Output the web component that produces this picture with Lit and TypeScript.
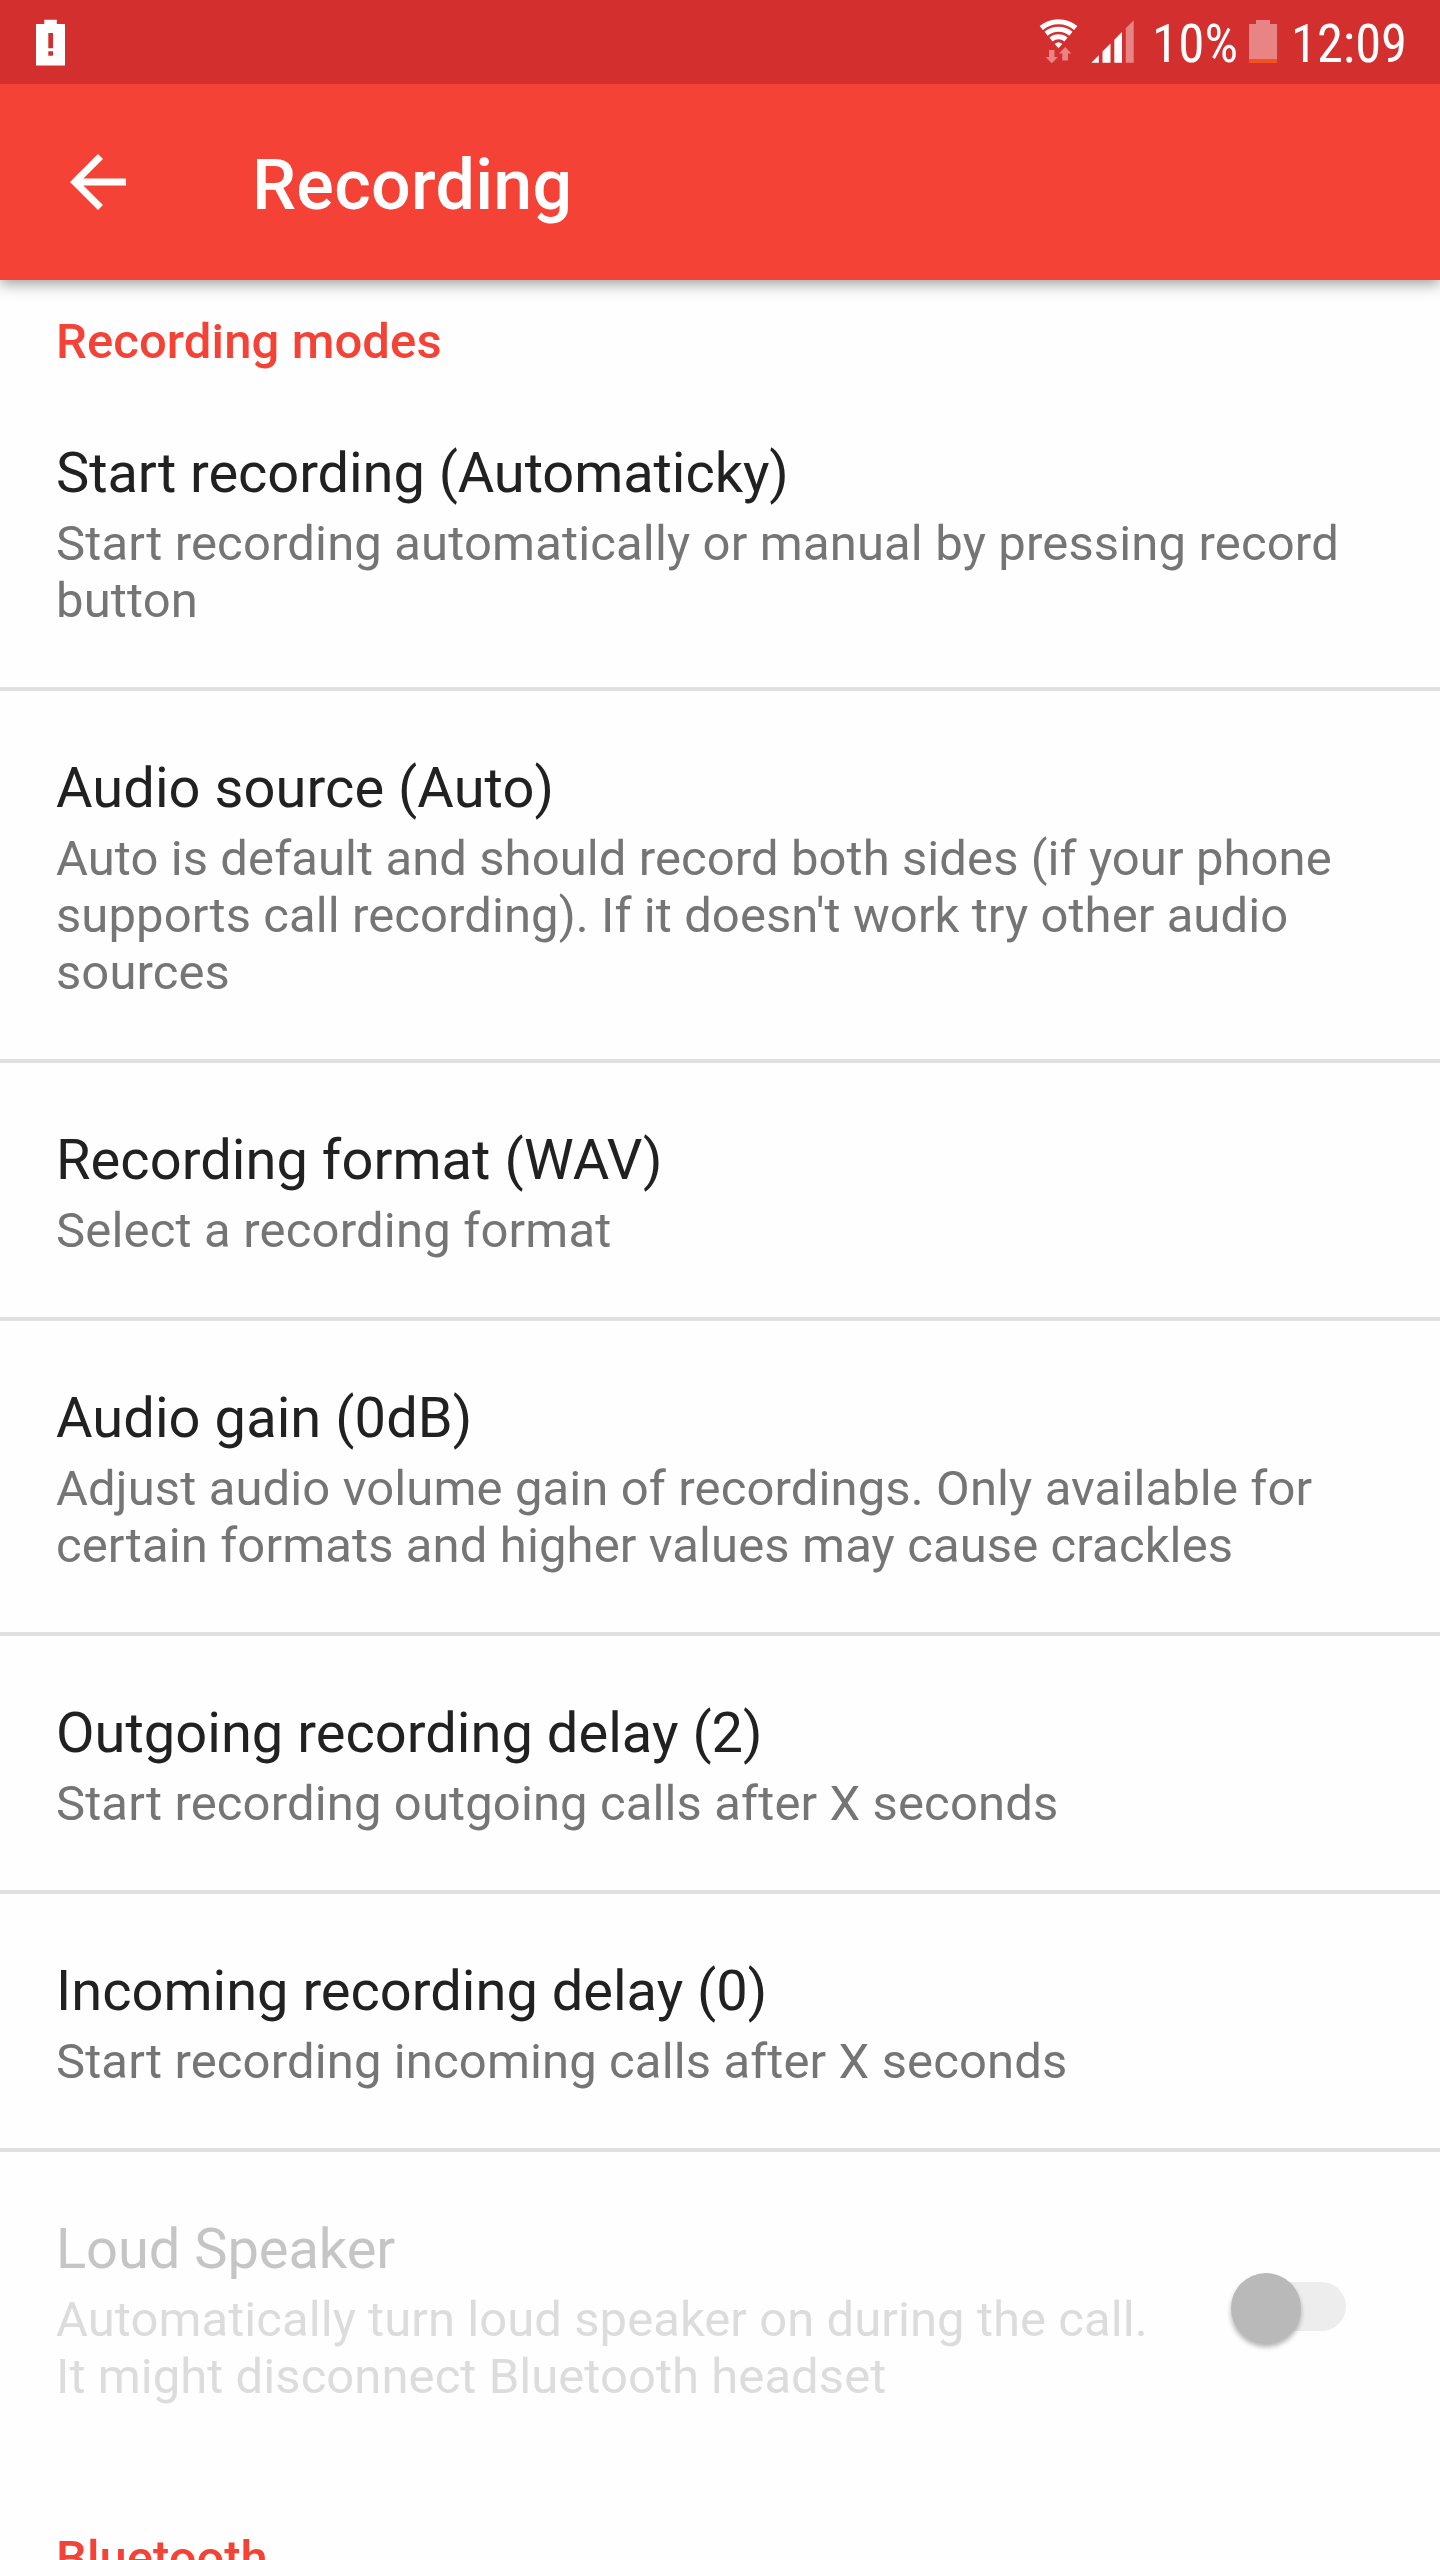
import { LitElement, html, css, svg, nothing } from "lit";
import { customElement } from "lit/decorators.js";
import { styleMap } from "lit/directives/style-map.js";

interface Preference {
  title: string;
  summary: string;
  // Letter spacing of the title and of the summary, in pixels.
  tracking: [number, number];
  disabled?: boolean;
}

const preferences: Preference[] = [
  { title: "Start recording (Automaticky)", summary: "Start recording automatically or manual by pressing record button", tracking: [-0.08, 0.15] },
  { title: "Audio source (Auto)", summary: "Auto is default and should record both sides (if your phone supports call recording). If it doesn't work try other audio sources", tracking: [0.07, 0.08] },
  { title: "Recording format (WAV)", summary: "Select a recording format", tracking: [0.05, 0.18] },
  { title: "Audio gain (0dB)", summary: "Adjust audio volume gain of recordings. Only available for certain formats and higher values may cause crackles", tracking: [0.08, 0.12] },
  { title: "Outgoing recording delay (2)", summary: "Start recording outgoing calls after X seconds", tracking: [0.03, 0.12] },
  { title: "Incoming recording delay (0)", summary: "Start recording incoming calls after X seconds", tracking: [0, 0.12] },
  { title: "Loud Speaker", summary: "Automatically turn loud speaker on during the call. It might disconnect Bluetooth headset", tracking: [-0.05, 0.06], disabled: true },
];

// Arc of the wifi fan, centred on (18.5, 29.5) and opening 40 degrees to each side.
const fan = (r: number) => {
  const dx = r * Math.sin((40 * Math.PI) / 180);
  const dy = r * Math.cos((40 * Math.PI) / 180);
  return svg`<path d="M${18.5 - dx} ${29.5 - dy}A${r} ${r} 0 0 1 ${18.5 + dx} ${29.5 - dy}" fill="none" stroke="#fff" stroke-width="5"/>`;
};

@customElement("status-bar")
class StatusBar extends LitElement {
  static styles = css`
    :host { display: flex; justify-content: space-between; height: 84px; background: #d32f2f; }
    svg { display: block; flex: none; overflow: visible; font-family: "Roboto Condensed", Roboto, sans-serif; }
    .left { padding: 19px 0 0 36px; }
    .right { display: flex; padding: 19px 32px 0 0; }
    .wifi { margin-right: 14px; }
    .signal { margin-right: 18px; }
    .level { margin-right: 10px; }
    .battery { margin-right: 14px; }
  `;
  render() {
    return html`
      <div class="left">
        <svg width="29" height="47" viewBox="0 0 29 47">
          <path fill="#fff" fill-rule="evenodd" d="M8.3 .7H20.8V5H29V46.5H0V5H8.3ZM12.3 14V29.3H17V14ZM12.3 32.3V36.8H17V32.3Z"/>
        </svg>
      </div>
      <div class="right">
        <svg class="wifi" width="37" height="45" viewBox="0 0 37 45">
          ${fan(26.8)}${fan(19.3)}${fan(11.7)}
          <path fill="#fff" d="M14.7 25.1Q18.5 21.6 22.3 25.1L18.5 29.3Z"/>
          <path fill="#e88484" d="M9 31H14.5V38H18L11.8 44.3L5.5 38H9ZM22.3 41.5H28V34.5H31.3L25.2 28L19 34.5H22.3Z"/>
        </svg>
        <svg class="signal" width="43" height="45" viewBox="0 0 43 45">
          <path fill="#fff" d="M.3 43.7L7.8 36.2V43.7ZM11.5 43.7V32.5L19.5 24.5V43.7ZM23.3 43.7V20.7L31 13V43.7Z"/>
          <path fill="#e88484" d="M34.8 43.7V9.2L42.7 1.3V43.7Z"/>
        </svg>
        <svg class="level" width="87" height="65" viewBox="0 0 87 65">
          <text x="0" y="43" font-size="54" fill="#fff" textLength="86" lengthAdjust="spacingAndGlyphs">10%</text>
        </svg>
        <svg class="battery" width="28" height="45" viewBox="0 0 28 45">
          <path fill="#e88484" d="M7 1H21V5H28V40H0V5H7Z"/>
          <path fill="#f4511e" d="M0 40H28V44H0Z"/>
        </svg>
        <svg class="clock" width="117" height="65" viewBox="0 0 117 65">
          <text x="0" y="43" font-size="54" fill="#fff" textLength="116" lengthAdjust="spacingAndGlyphs">12:09</text>
        </svg>
      </div>
    `;
  }
}

@customElement("app-bar")
class AppBar extends LitElement {
  static styles = css`
    :host { display: flex; height: 196px; background: #f44336; box-shadow: 0 4px 14px rgba(0, 0, 0, 0.38); }
    svg { display: block; flex: none; margin: 56px 112px 0 56px; }
    .title { margin-top: 60px; font-size: 70px; line-height: 82px; font-weight: 500; letter-spacing: 0.3px; color: #fff; white-space: nowrap; }
  `;
  render() {
    return html`
      <svg width="84" height="84" viewBox="0 0 24 24"><path fill="#fff" d="M20 11H7.83l5.59-5.59L12 4l-8 8 8 8 1.41-1.41L7.83 13H20v-2z"/></svg>
      <div class="title">Recording</div>
    `;
  }
}

@customElement("app-root")
class AppRoot extends LitElement {
  static styles = css`
    :host { display: block; height: 2560px; overflow: hidden; background: #fefefe; font-family: Roboto, sans-serif; }
    status-bar { position: relative; z-index: 2; }
    app-bar { position: relative; z-index: 1; }
    .section { padding: 33px 56px 6px; font-size: 49px; line-height: 57px; font-weight: 500; letter-spacing: 0.1px; color: #f44336; }
    .section.next { padding-top: 67px; letter-spacing: 0; }
    .pref { display: flex; align-items: flex-start; padding: 64px 56px 58px; border-bottom: 4px solid #e0e0e0; }
    .pref.disabled { border-bottom: 0; }
    .body { flex: 1; min-width: 0; }
    .name { font-size: 56px; line-height: 66px; color: #212121; }
    .summary { margin-top: 9px; font-size: 49px; line-height: 57px; color: #757575; }
    .disabled .name { color: #c5c5c5; }
    .disabled .summary { color: #dcdcdc; }
    .toggle { display: flex; align-items: center; flex: none; width: 115px; height: 70px; margin: 57px 38px 0 56px; }
    .knob { flex: none; width: 70px; height: 70px; border-radius: 50%; background: #b9b9b9; box-shadow: 0 4px 5px rgba(0, 0, 0, 0.3); z-index: 1; }
    .track { flex: none; width: 80px; height: 49px; margin: -3px 0 0 -35px; border-radius: 0 25px 25px 0; background: #ededed; }
  `;
  render() {
    return html`
      <status-bar></status-bar>
      <app-bar></app-bar>
      <div class="section">Recording modes</div>
      ${preferences.map(
        (p) => html`
          <div class="pref ${p.disabled ? "disabled" : ""}">
            <div class="body">
              <div class="name" style=${styleMap({ letterSpacing: `${p.tracking[0]}px` })}>${p.title}</div>
              <div class="summary" style=${styleMap({ letterSpacing: `${p.tracking[1]}px` })}>${p.summary}</div>
            </div>
            ${p.disabled ? html`<div class="toggle"><div class="knob"></div><div class="track"></div></div>` : nothing}
          </div>
        `
      )}
      <div class="section next">Bluetooth</div>
    `;
  }
}
